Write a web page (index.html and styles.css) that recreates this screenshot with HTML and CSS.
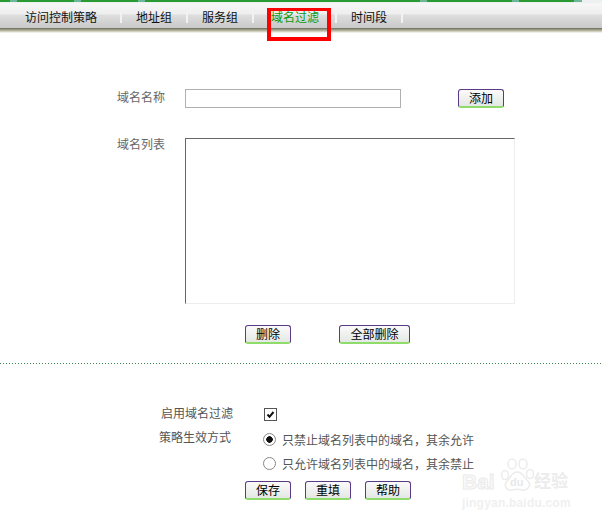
FILE: index.html
```html
<!DOCTYPE html>
<html lang="en">
<head>
    <meta charset="UTF-8">
    <meta name="viewport" content="width=device-width, initial-scale=1.0">
    <title>域名过滤</title>
    <link rel="stylesheet" href="styles.css">
</head>
<body>

    <div class="top-line"></div>
    <div class="nav">
        <a class="tab tab-first">访问控制策略</a>
        <a class="tab">地址组</a>
        <a class="tab">服务组</a>
        <a class="tab tab-filter active">域名过滤</a>
        <a class="tab">时间段</a>
    </div>
    <div class="nav-shadow"></div>
    <div class="highlight"></div>

    <div class="domain-form">
        <div class="name-row">
            <label class="label">域名名称</label>
            <input class="name-input" type="text">
            <button class="btn add-btn">添加</button>
        </div>
        <div class="list-row">
            <label class="label">域名列表</label>
            <div class="domain-list"></div>
        </div>
        <div class="list-actions">
            <button class="btn">删除</button>
            <button class="btn btn-wide">全部删除</button>
        </div>
    </div>

    <div class="divider"></div>

    <div class="filter-form">
        <div class="enable-row">
            <label class="label2">启用域名过滤</label>
            <span class="checkbox">
                <svg width="13" height="13" viewBox="0 0 13 13"><path d="M3.5 6.5 L5.5 8.8 L9.5 4" fill="none" stroke="#111" stroke-width="2"/></svg>
            </span>
        </div>
        <div class="mode-row">
            <label class="label2 label-mode">策略生效方式</label>
            <div class="modes">
                <div class="mode"><span class="radio checked"></span>只禁止域名列表中的域名，其余允许</div>
                <div class="mode"><span class="radio"></span>只允许域名列表中的域名，其余禁止</div>
            </div>
        </div>
        <div class="form-actions">
            <button class="btn">保存</button>
            <button class="btn">重填</button>
            <button class="btn">帮助</button>
        </div>
    </div>

    <div class="watermark">
        <div class="wm-logo">
            <span class="wm-bai">Bai</span>
            <span class="wm-paw">
                <svg width="34" height="34" viewBox="0 0 34 34">
                    <g fill="#fff" stroke="#ececec" stroke-width="1.5">
                        <ellipse cx="5" cy="17" rx="3.5" ry="4.5"/>
                        <ellipse cx="12" cy="6" rx="4" ry="5"/>
                        <ellipse cx="23" cy="6" rx="4" ry="5"/>
                        <ellipse cx="30" cy="16" rx="3.5" ry="4.5"/>
                        <path d="M17 14 C23 14 24 20 28 23 C32 28 27 33 22 32 C19 31 15 31 12 32 C7 33 3 28 7 23 C11 20 11 14 17 14 Z"/>
                    </g>
                </svg>
                <span class="wm-du">du</span>
            </span>
            <span class="wm-jy">经验</span>
        </div>
        <div class="wm-url">jingyan.baidu.com</div>
    </div>

</body>
</html>
```

FILE: styles.css
```css
html, body {
    margin: 0;
    padding: 0;
    background: #fff;
}
body {
    font-family: "Liberation Sans", "Noto Sans CJK SC", sans-serif;
    font-size: 12px;
    height: 523px;
    overflow: hidden;
    position: relative;
}
.top-line {
    height: 2px;
    border-bottom: 1px solid #e8f2ea;
    background: linear-gradient(90deg,
        #2a9a35 10px, #6db89a 10px, #6db89a 17px,
        #2a9a35 17px, #2a9a35 74px, #6db89a 74px, #6db89a 81px,
        #2a9a35 81px, #2a9a35 138px, #6db89a 138px, #6db89a 145px,
        #2a9a35 145px, #2a9a35 420px, #6db89a 420px, #6db89a 427px,
        #2a9a35 427px, #2a9a35 512px, #6db89a 512px, #6db89a 519px,
        #2a9a35 519px, #2a9a35 574px, #6db89a 574px, #6db89a 582px,
        #eef0f4 582px);
}
.nav {
    box-sizing: border-box;
    display: flex;
    height: 25px;
    padding-top: 3px;
    align-items: center;
    background: linear-gradient(#f7f7f7, #eeeeee 44%, #dedede 48%, #c9c9c9);
}
.tab {
    box-sizing: border-box;
    width: 66px;
    height: 12px;
    line-height: 15px;
    padding-left: 14px;
    color: #111;
    border-right: 2px solid #f2f2f2;
    white-space: nowrap;
}
.tab-first {
    width: 122px;
    padding-left: 25px;
}
.tab-filter {
    width: 83px;
    padding-left: 17px;
}
.active {
    color: #0a9a0a;
}
.nav-shadow {
    height: 5px;
    background: linear-gradient(#6c6c5c, #a4a48e 40%, #d8d8c8 75%, #fff);
}
.highlight {
    position: absolute;
    left: 267px;
    top: 8px;
    width: 56px;
    height: 26px;
    border: 4px solid #f00;
    border-top-width: 3px;
}
.domain-form {
    padding: 56px 0 0 117px;
}
.label {
    width: 68px;
    flex: none;
    color: #666;
    line-height: 18px;
}
.name-row {
    display: flex;
}
.name-input {
    box-sizing: border-box;
    width: 216px;
    height: 19px;
    margin: 0;
    padding: 0;
    border: 1px solid #b0b0b0;
}
.btn {
    box-sizing: border-box;
    width: 46px;
    height: 19px;
    margin: 0;
    padding: 2px 0 0 0;
    font: inherit;
    color: #000;
    line-height: 14px;
    border: 1px solid #5a3a82;
    border-bottom: 2px solid #8fdc6a;
    border-radius: 3px;
    background: linear-gradient(#fafafa, #e4e8e4);
}
.add-btn {
    margin-left: 57px;
}
.btn-wide {
    width: 71px;
}
.list-row {
    display: flex;
    margin-top: 30px;
}
.list-row .label {
    line-height: 14px;
}
.domain-list {
    box-sizing: border-box;
    width: 330px;
    height: 166px;
    border: 1px solid #ededed;
    border-top-color: #666;
    border-left-color: #666;
}
.list-actions {
    display: flex;
    gap: 48px;
    margin: 21px 0 0 128px;
}
.divider {
    margin-top: 19px;
    height: 1px;
    background: repeating-linear-gradient(90deg, #3a8a4a 0, #3a8a4a 1px, #fff 1px, #fff 3px);
}
.filter-form {
    padding: 44px 0 0 161px;
}
.label2 {
    width: 102px;
    flex: none;
    color: #555;
    line-height: 12px;
}
.label-mode {
    margin-left: -2px;
    width: 104px;
    padding-top: 2px;
}
.enable-row {
    display: flex;
    height: 22px;
}
.checkbox {
    box-sizing: border-box;
    display: block;
    width: 13px;
    height: 13px;
    margin-left: 1px;
    border: 1px solid #555;
    background: #fff;
}
.checkbox svg {
    display: block;
    margin: -1px;
}
.mode-row {
    display: flex;
}
.modes {
    margin-top: -3px;
}
.mode {
    display: flex;
    align-items: center;
    height: 24px;
    color: #555;
    white-space: nowrap;
}
.radio {
    box-sizing: border-box;
    width: 13px;
    height: 13px;
    margin-right: 6px;
    border: 1px solid #888;
    border-radius: 50%;
    background: #fff;
}
.radio.checked {
    background: radial-gradient(circle, #111 3px, #fff 3.5px);
}
.form-actions {
    display: flex;
    gap: 14px;
    margin: 6px 0 0 84px;
}
.watermark {
    position: absolute;
    left: 462px;
    top: 458px;
    width: 108px;
    color: #fafafa;
    font-weight: bold;
    white-space: nowrap;
}
.wm-logo {
    display: flex;
    height: 34px;
    align-items: flex-end;
}
.wm-bai {
    width: 38px;
    font-size: 21px;
    line-height: 21px;
    -webkit-text-stroke: 1px #ebebeb;
}
.wm-paw {
    position: relative;
    width: 34px;
    height: 34px;
}
.wm-paw svg {
    display: block;
}
.wm-du {
    position: absolute;
    left: 10px;
    top: 18px;
    font-size: 11px;
    line-height: 12px;
    color: #e8e8e8;
}
.wm-jy {
    font-size: 17px;
    line-height: 21px;
    color: #ececec;
}
.wm-url {
    margin-top: 5px;
    font-size: 12px;
    line-height: 12px;
    letter-spacing: 0.2px;
    color: #f0f0f0;
}
```
